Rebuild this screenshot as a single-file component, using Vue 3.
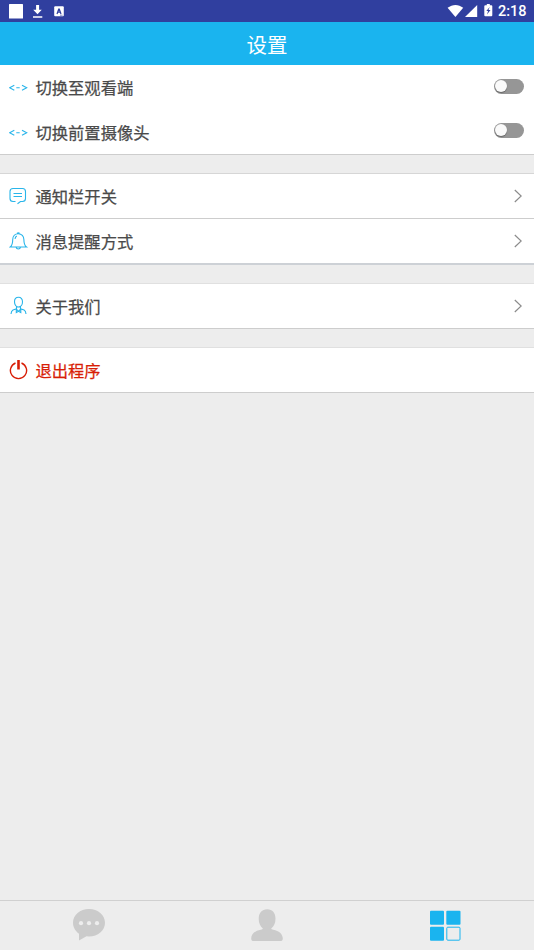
<script setup>
const groups = [
  {
    name: 'camera',
    rows: [
      { label: '切换至观看端', icon: 'swap', toggle: true },
      { label: '切换前置摄像头', icon: 'swap', toggle: true },
    ],
  },
  {
    name: 'notice',
    rows: [
      { label: '通知栏开关', icon: 'message' },
      { label: '消息提醒方式', icon: 'bell' },
    ],
  },
  { name: 'about', rows: [{ label: '关于我们', icon: 'person' }] },
  { name: 'exit', rows: [{ label: '退出程序', icon: 'power', danger: true }] },
]
</script>

<template>
  <div class="screen">
    <div class="status">
      <svg class="status-left" viewBox="0 0 70 22">
        <rect x="9" y="4" width="14" height="14.5" rx=".5" />
        <path d="M36.1 5h3v4.7h2.7l-4.3 4.5-4.3-4.5h2.9zM33 16.2h9.3v1.6H33z" />
        <rect x="54.2" y="6.2" width="9.6" height="10" rx="1" />
        <path class="letter" d="M57 14l1.7-4.8h.6L61 14M57.7 12.2h2.6" />
        <path class="corner" d="M60 15.2h2.6" />
      </svg>
      <svg class="status-right" viewBox="0 0 46 22">
        <path d="M-.4 7.8C4.5 3.9 10.5 3.9 15.2 7.8L7.4 17z" />
        <path d="M29.2 5v12H17z" />
        <path d="M38.8 4h3v1.2h1.5q1 0 1 1v9q0 1-1 1h-6q-1 0-1-1v-9q0-1 1-1h1.5z" />
        <path class="bolt" d="M41.7 7l-3.4 4.1h1.8L39 14.6l3.5-4.6h-2z" />
      </svg>
      <span class="time">2:18</span>
    </div>
    <header class="header">设置</header>

    <main class="content">
      <section v-for="g in groups" :key="g.name" class="group" :class="g.name">
        <div v-for="r in g.rows" :key="r.label" class="row" :class="{ danger: r.danger }">
          <svg class="icon" viewBox="0 0 20 22">
            <path v-if="r.icon === 'swap'" d="M5.3 9.3L.6 11.8l4.7 2.5M7.3 11.8h3.4M13 9.3l4.7 2.5-4.7 2.5" />
            <path v-else-if="r.icon === 'message'" d="M6.500 16.500H4Q1 16.500 1 13.500V6.500Q1 3.500 4 3.500H13.500Q16.500 3.500 16.500 6.500V13.500Q16.500 16.500 13.500 16.500H11.500L8.500 18.800M4.500 8.500h8.500M4.500 11.500h8.500" />
            <path v-else-if="r.icon === 'bell'" d="M1.2 17C3.2 15.5 3.7 13.8 3.700 9.800C3.700 6.200 6 3.700 9.300 3.700S14.900 6.200 14.900 9.800C14.900 13.800 15.400 15.500 17.500 17zM8 3.200q1.300-.7 2.600 0M7 17.200q.5 1.800 2.300 1.800t2.300-1.800M6 8.800q.3-1.900 1.800-2.800" />
            <path v-else-if="r.icon === 'person'" d="M9.500 2.300C6.800 2.300 5.500 4 5.500 6.800S7 12 9.500 12s4-2.500 4-5.200-1.300-4.500-4-4.500zM7.500 11.600v2.200L4 15Q2.200 16 2 19M11.500 11.600v2.200l3.600 1.200q1.700 1 1.900 4M7.200 14l2.300 2.300L11.800 14M7.300 14v3.500l2.200-1.200 2.300 1.200V14" />
            <template v-else>
              <path d="M6.500 4A8.100 8.100 0 1 0 12.500 4" />
              <path class="bar" d="M9.500 1v9.500" />
            </template>
          </svg>
          <span class="label">{{ r.label }}</span>
          <span v-if="r.toggle" class="toggle"><i class="knob"></i></span>
          <svg v-else-if="!r.danger" class="chevron" viewBox="0 0 8 14">
            <path d="M.8 1l6.4 6-6.4 6" />
          </svg>
        </div>
      </section>
    </main>

    <nav class="tabs">
      <div class="tab">
        <svg viewBox="0 0 34 34">
          <path d="M17 1C8.1 1 1 7 1 14.7c0 4.5 2.400 8.500 6 11V32.500l7.500-4.300 2.500.2c8.900 0 16-6 16-13.700S25.900 1 17 1z" />
          <g class="dots"><circle cx="9" cy="15.2" r="2.1" /><circle cx="17" cy="15.2" r="2.1" /><circle cx="25" cy="15.2" r="2.1" /></g>
        </svg>
      </div>
      <div class="tab">
        <svg viewBox="0 0 34 34">
          <path d="M17.200 1.300C12 1.300 8.700 5 8.700 10.800c0 4.500 1.700 7.700 4.100 9.700-.1.800-.8 1-2 1.200C5 22.700 1.200 26 1.200 30.500q0 2.600 2.700 2.600h26.200q2.700 0 2.700-2.600c0-4.500-3.800-7.800-9.600-8.800-1.200-.2-1.900-.4-2-1.200 2.600-2 4.300-5.200 4.300-9.700 0-5.800-3-9.500-8.300-9.500z" />
        </svg>
      </div>
      <div class="tab active">
        <svg viewBox="0 0 34 34">
          <rect x="2" y="2.7" width="14" height="14" rx="1" />
          <rect x="18.3" y="2.7" width="14.2" height="14" rx="1" />
          <rect x="2" y="18.7" width="14" height="14" rx="1" />
          <rect class="open" x="18.8" y="19.2" width="13.2" height="13" rx="1" />
        </svg>
      </div>
    </nav>
  </div>
</template>

<style>
body {
  margin: 0;
}
</style>

<style scoped>
.screen {
  display: flex;
  flex-direction: column;
  height: 950px;
  background: #ededed;
  font-family: "Noto Sans CJK SC", sans-serif;
}
.status {
  display: flex;
  height: 22px;
  background: #303f9f;
  color: #fff;
}
.status svg {
  height: 22px;
  fill: #fff;
  overflow: visible;
}
.status-left {
  width: 70px;
}
.status-right {
  width: 46px;
  padding-left: 378px;
}
.status-left .letter,
.status-left .corner {
  fill: none;
  stroke: #303f9f;
  stroke-width: 1.2;
}
.status-left .corner {
  stroke-width: .6;
}
.status-right .bolt {
  fill: #303f9f;
}
.time {
  padding-left: 4px;
  font: 500 14.5px/24px Roboto, sans-serif;
}
.header {
  height: 43px;
  background: #1ab4ef;
  color: #fff;
  font-size: 20.5px;
  line-height: 44px;
  text-align: center;
}
.content {
  flex: 1;
}
.group {
  box-sizing: border-box;
  background: #fff;
  border-top: 1px solid #d6d6d6;
  border-bottom: 1px solid #cdcdcd;
  margin-bottom: 18px;
}
.camera {
  border-top: 0;
}
.notice {
  border-bottom: 2px solid #cdd1d6;
}
.about,
.exit {
  border-top-color: #e0e0e0;
}
.row {
  display: flex;
  align-items: center;
  height: 44px;
  padding: 0 10px 0 9px;
  color: #4a4a4a;
}
.camera .row {
  height: 44.5px;
}
.notice .row + .row {
  border-top: 1px solid #cdcdcd;
}
.icon {
  width: 20px;
  height: 22px;
  fill: none;
  stroke: #29b5ea;
  stroke-width: 1.1;
}
.label {
  flex: 1;
  padding-left: 6.5px;
  font-size: 16.3px;
  line-height: 24px;
  -webkit-text-stroke: .25px currentColor;
}
.row.danger {
  color: #d81e06;
}
.danger .icon {
  stroke: #d81e06;
  stroke-width: 1.4;
}
.danger .bar {
  stroke-width: 2.6;
}
.toggle {
  box-sizing: border-box;
  width: 30px;
  height: 15px;
  margin-bottom: 2px;
  padding: 1px;
  border-radius: 8px;
  background: #969696;
}
.knob {
  display: block;
  width: 12px;
  height: 12px;
  border-radius: 50%;
  background: #fafafa;
  box-shadow: 0 1px 1px #666;
}
.chevron {
  width: 8px;
  height: 14px;
  margin-right: 2px;
  fill: none;
  stroke: #8c8c8c;
  stroke-width: 1.2;
}
.tabs {
  display: flex;
  height: 49px;
  border-top: 1px solid #d0d0d0;
}
.tab {
  display: flex;
  flex: 1;
  justify-content: center;
  padding-top: 7px;
}
.tab svg {
  width: 34px;
  height: 34px;
  fill: #cbcbcb;
}
.tab .dots {
  fill: #ededed;
}
.active svg {
  fill: #1ab4ef;
}
.active .open {
  fill: #ededed;
  stroke: #1ab4ef;
  stroke-width: 1;
}
</style>
